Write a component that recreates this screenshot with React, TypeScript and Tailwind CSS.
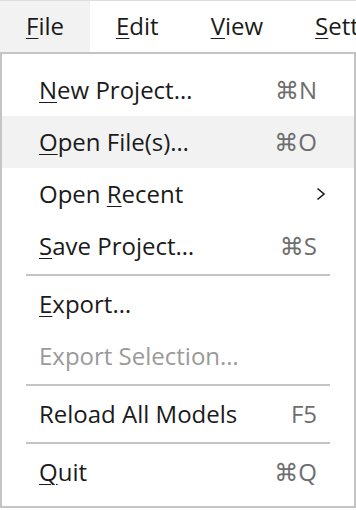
import type { ReactNode } from "react";

type Item =
  | { kind: "item"; pre?: string; mnemonic?: string; label: string; shortcut?: string; submenu?: boolean; disabled?: boolean; active?: boolean }
  | { kind: "sep" };

const items: Item[] = [
  { kind: "item", mnemonic: "N", label: "ew Project…", shortcut: "⌘N" },
  { kind: "item", mnemonic: "O", label: "pen File(s)…", shortcut: "⌘O", active: true },
  { kind: "item", pre: "Open ", mnemonic: "R", label: "ecent", submenu: true },
  { kind: "item", mnemonic: "S", label: "ave Project…", shortcut: "⌘S" },
  { kind: "sep" },
  { kind: "item", mnemonic: "E", label: "xport…" },
  { kind: "item", label: "Export Selection…", disabled: true },
  { kind: "sep" },
  { kind: "item", label: "Reload All Models", shortcut: "F5" },
  { kind: "sep" },
  { kind: "item", mnemonic: "Q", label: "uit", shortcut: "⌘Q" },
];

function Mn({ children }: { children: ReactNode }) {
  return <span className="underline decoration-1 underline-offset-[3px]">{children}</span>;
}

function Chevron() {
  return (
    <svg width="10" height="14" viewBox="0 0 10 14" className="ml-auto mr-[-9px]">
      <path d="M1.5 1.5 L8 7 L1.5 12.5" fill="none" stroke="#1b1b1b" strokeWidth="1.6" />
    </svg>
  );
}

function MenuBar() {
  const tabs: [string, string][] = [
    ["F", "ile"],
    ["E", "dit"],
    ["V", "iew"],
    ["S", "ettings"],
  ];
  return (
    <div className="flex h-[52px] border-t border-[#dcdcdc] bg-white whitespace-nowrap">
      {tabs.map(([m, rest], i) => (
        <div
          key={m + rest}
          className={`flex items-center px-[26px] pb-[1px] ${i === 0 ? "bg-[#f2f2f2]" : ""}`}
        >
          <Mn>{m}</Mn>
          {rest}
        </div>
      ))}
    </div>
  );
}

export default function App() {
  return (
    <div
      className="w-[356px] h-[510px] overflow-hidden bg-white text-[24px] text-[#1b1b1b]"
      style={{ fontFamily: '"Open Sans", "DejaVu Sans", sans-serif' }}
    >
      <MenuBar />
      <div className="w-[356px] h-[456px] border-2 border-[#c4c4c4] bg-white pt-[10px]">
        {items.map((it, i) =>
          it.kind === "sep" ? (
            <div key={i} className="mx-[24px] my-[2px] h-[2px] bg-[#c4c4c4]" />
          ) : (
            <div
              key={i}
              className={`flex h-[52px] items-center pl-[37px] pr-[37px] ${
                it.active ? "bg-[#f2f2f2]" : ""
              } ${it.disabled ? "text-[#9a9a9a]" : ""}`}
            >
              <span>
                {it.pre}
                {it.mnemonic && <Mn>{it.mnemonic}</Mn>}
                {it.label}
              </span>
              {it.shortcut && <span className="ml-auto text-[#6e6e6e]">{it.shortcut}</span>}
              {it.submenu && <Chevron />}
            </div>
          )
        )}
      </div>
    </div>
  );
}
